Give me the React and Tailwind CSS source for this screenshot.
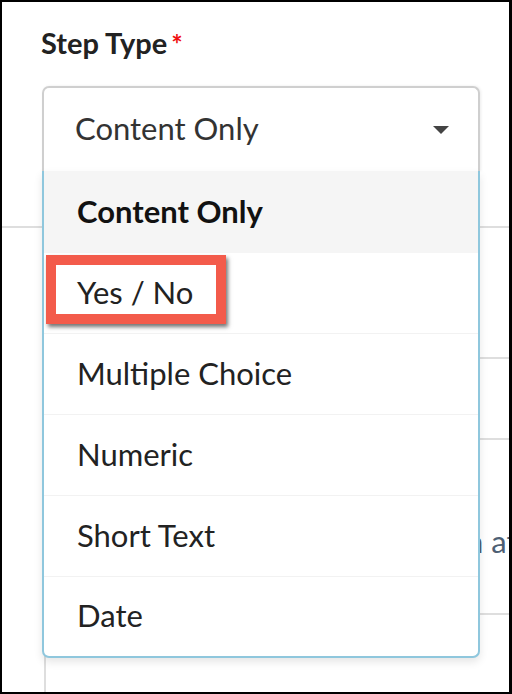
import React from 'react';

const options = ['Content Only', 'Yes / No', 'Multiple Choice', 'Numeric', 'Short Text', 'Date'];

function Caret() {
  return (
    <svg width="16" height="8" viewBox="0 0 16 8">
      <path d="M0 0 H16 L8 8 Z" fill="#444" />
    </svg>
  );
}

export default function App() {
  return (
    <div
      className="relative w-[512px] h-[694px] overflow-hidden bg-white border-black border-t-2 border-l-2 border-r-[3px] border-b-2"
      style={{ fontFamily: 'Lato, "Open Sans", sans-serif' }}
    >
      {/* form field */}
      <div className="relative z-10 pt-[23px] pl-[40px] pr-[29px]">
        <label className="block text-[29px] leading-[35px] font-bold text-[#222] -ml-[1px]">
          Step Type
          <span className="ml-[4px] text-[27px] text-[#f01010]">*</span>
        </label>

        <div className="relative mt-[25px]">
          <div className="h-[85px] flex items-center justify-between pl-[31px] pr-[29px] border-2 border-b-0 border-[#cfcfcf] rounded-t-[7px] bg-white shadow-[1px_0_3px_rgba(0,0,0,0.08)]">
            <span className="text-[31px] text-[#333] -mt-[3px]">Content Only</span>
            <Caret />
          </div>

          {/* open menu */}
          <div className="absolute left-0 right-0 top-full bg-white border-2 border-t-0 border-[#8fc7dd] rounded-b-[7px] shadow-[0_4px_8px_rgba(0,0,0,0.1)]">
            {options.map((opt, i) => (
              <div
                key={opt}
                className={
                  'relative flex items-center pl-[33px] pb-[2px] text-[31px] ' +
                  (i === 0
                    ? 'h-[82px] bg-[#f5f5f5] font-bold text-[#111]'
                    : i === 5
                    ? 'h-[79px] text-[#222]'
                    : 'h-[81px] text-[#222] border-b border-[#f2f2f2]')
                }
              >
                {opt}
                {i === 1 && (
                  <div className="absolute left-[2px] top-[2px] w-[180px] h-[69px] border-[10px] border-[#f35b4b] shadow-[2px_3px_4px_rgba(0,0,0,0.55)]" />
                )}
              </div>
            ))}
          </div>
        </div>
      </div>

      {/* page content underneath */}
      <div className="mt-[55px] border-t-2 border-[#dedede]">
        <div className="ml-[42px] h-[470px] border-l-2 border-[#dedede]">
          <div className="h-[131px] border-b-2 border-[#dedede]" />
          <div className="h-[81px] border-b-2 border-[#dedede]" />
          <div className="h-[175px] border-b-2 border-[#dedede] overflow-hidden">
            <p className="mt-[83px] pl-[420px] whitespace-nowrap text-[31px] leading-[37px] text-[#4e5f74]">
              n at
            </p>
          </div>
        </div>
      </div>
    </div>
  );
}
